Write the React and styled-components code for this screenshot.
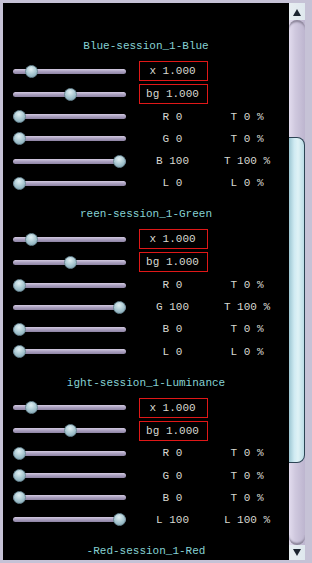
import styled, { createGlobalStyle } from "styled-components";

const GlobalStyle = createGlobalStyle`
  html, body {
    margin: 0;
    padding: 0;
    background: #c4c0d4;
  }
`;

const Frame = styled.div`
  width: 312px;
  height: 563px;
  box-sizing: border-box;
  padding: 3px 7px 3px 3px;
  background: #c6c2d6;
  display: flex;
  overflow: hidden;
`;

const Content = styled.div`
  flex: 1;
  background: #000;
  overflow: hidden;
  padding-top: 23px;
  font-family: "Liberation Mono", "DejaVu Sans Mono", monospace;
  font-size: 11px;
`;

const Section = styled.div``;

const Title = styled.div`
  height: 14px;
  line-height: 14px;
  padding-top: 13px;
  margin-bottom: 6.6px;
  text-align: center;
  color: #86d2d4;
  white-space: nowrap;
`;

const Row = styled.div`
  height: ${(p) => (p.$tall ? 23 : 22.2)}px;
  display: grid;
  grid-template-columns: 126px 69px 80px;
  align-items: center;
  padding-left: 10px;
  color: #d8d8d0;
`;

const Slider = styled.div`
  position: relative;
  width: 113px;
  height: 5px;
  border-radius: 3px;
  background: linear-gradient(#d2c9e0, #aaa0bf 50%, #8c82a2);
`;

const Thumb = styled.div`
  position: absolute;
  top: -4px;
  width: 13px;
  height: 13px;
  border-radius: 50%;
  box-sizing: border-box;
  border: 1px solid #6a8894;
  background: radial-gradient(circle at 45% 30%, #e0eff2, #a4c4ce 55%, #7a9eac);
`;

const Value = styled.div`
  box-sizing: border-box;
  height: 20px;
  line-height: 18px;
  text-align: center;
  white-space: nowrap;
  border: 1px solid ${(p) => (p.$boxed ? "#e01818" : "transparent")};
  padding-right: 2px;
`;

const Right = styled.div`
  text-align: center;
  white-space: nowrap;
  line-height: 14px;
  padding-right: 2px;
`;

const Scrollbar = styled.div`
  width: 16px;
  display: flex;
  flex-direction: column;
  background: linear-gradient(90deg, #e2dcee, #cfc8de 40%, #bdb5cf);
`;

const ArrowButton = styled.div`
  height: ${(p) => p.$h}px;
  background: linear-gradient(90deg, #e8eef2, #dfe8ee);
  display: flex;
  justify-content: center;
  align-items: ${(p) => (p.$up ? "flex-start" : "flex-end")};
  padding: ${(p) => (p.$up ? "6px 0 0" : "0 0 4px")};
  box-sizing: border-box;
`;

const TrackCap = styled.div`
  height: ${(p) => p.$h}px;
  border-radius: ${(p) => (p.$top ? "8px 8px 0 0" : "0 0 8px 8px")};
  box-shadow: ${(p) =>
    p.$top ? "inset 0 3px 2px -1px #8a8398" : "inset 0 -3px 2px -1px #8a8398"};
`;

const Gap = styled.div`
  flex: ${(p) => (p.$grow ? 1 : "none")};
  height: ${(p) => (p.$h ? `${p.$h}px` : "auto")};
`;

const ScrollThumb = styled.div`
  height: 326px;
  box-sizing: border-box;
  border: 1px solid #2c4454;
  border-left: none;
  border-radius: 0 8px 8px 0;
  background: linear-gradient(90deg, #9cc6d2, #cfeaf2 35%, #dff2f6 60%, #bcdde6);
`;

const sections = [
  {
    title: "Blue-session_1-Blue",
    rows: [
      ["R", 0, "T 0 %"],
      ["G", 0, "T 0 %"],
      ["B", 100, "T 100 %"],
      ["L", 0, "L 0 %"],
    ],
  },
  {
    title: "reen-session_1-Green",
    rows: [
      ["R", 0, "T 0 %"],
      ["G", 100, "T 100 %"],
      ["B", 0, "T 0 %"],
      ["L", 0, "L 0 %"],
    ],
  },
  {
    title: "ight-session_1-Luminance",
    rows: [
      ["R", 0, "T 0 %"],
      ["G", 0, "T 0 %"],
      ["B", 0, "T 0 %"],
      ["L", 100, "L 100 %"],
    ],
  },
  { title: "-Red-session_1-Red", rows: [] },
];

function SliderBar({ pos }) {
  return (
    <Slider>
      <Thumb style={{ left: `${pos * 100}px` }} />
    </Slider>
  );
}

export default function App() {
  return (
    <>
      <GlobalStyle />
      <Frame>
        <Content>
          {sections.map((s) => (
            <Section key={s.title}>
              <Title>{s.title}</Title>
              {s.rows.length > 0 && (
                <>
                  <Row $tall>
                    <SliderBar pos={0.115} />
                    <Value $boxed>x 1.000</Value>
                    <Right />
                  </Row>
                  <Row $tall>
                    <SliderBar pos={0.505} />
                    <Value $boxed>bg 1.000</Value>
                    <Right />
                  </Row>
                  {s.rows.map(([ch, v, t]) => (
                    <Row key={ch}>
                      <SliderBar pos={v / 100} />
                      <Value>{`${ch} ${v}`}</Value>
                      <Right>{t}</Right>
                    </Row>
                  ))}
                </>
              )}
            </Section>
          ))}
        </Content>
        <Scrollbar>
          <ArrowButton $up $h={17}>
            <svg width="8" height="7" viewBox="0 0 8 7">
              <path d="M4 0 L8 7 L0 7 Z" fill="#1c2430" />
            </svg>
          </ArrowButton>
          <TrackCap $top $h={10} />
          <Gap $h={107} />
          <ScrollThumb />
          <Gap $grow />
          <TrackCap $h={10} />
          <ArrowButton $h={15}>
            <svg width="8" height="7" viewBox="0 0 8 7">
              <path d="M0 0 L8 0 L4 7 Z" fill="#1c2430" />
            </svg>
          </ArrowButton>
        </Scrollbar>
      </Frame>
    </>
  );
}
